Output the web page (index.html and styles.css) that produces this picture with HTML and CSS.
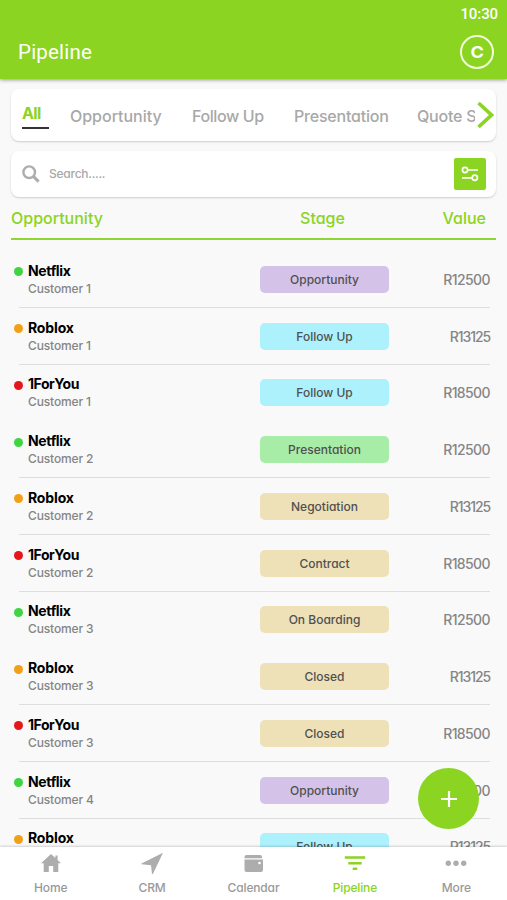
FILE: index.html
```html
<!DOCTYPE html>
<html lang="en">
<head>
<meta charset="utf-8">
<title>Pipeline</title>
<link rel="stylesheet" href="styles.css">
</head>
<body>
<div class="app">
  <header class="header">
    <div class="clock">10:30</div>
    <div class="bar"><h1 class="title">Pipeline</h1><div class="avatar"><span>C</span></div></div>
  </header>
  <main class="main">
    <nav class="tabs card">
      <div class="tab-strip">
        <span class="tab tab-active">All</span>
        <span class="tab t-opp">Opportunity</span>
        <span class="tab t-fol">Follow Up</span>
        <span class="tab t-pre">Presentation</span>
        <span class="tab t-quo">Quote Sent</span>
      </div>
      <svg class="chevron" width="17" height="28" viewBox="0 0 17 28"><path d="M1.500 2 14.500 14 1.500 26" fill="none" stroke="#8bd422" stroke-width="3.600"/></svg>
    </nav>
    <div class="search card">
      <svg width="18" height="18" viewBox="0 0 18 18" fill="none" stroke="#adadad"><circle cx="7.200" cy="7.200" r="5.800" stroke-width="2.400"/><path d="m11.600 11.600 5 5" stroke-width="3"/></svg>
      <span class="placeholder">Search.....</span>
      <div class="filter"><svg width="18" height="16" viewBox="0 0 18 16" fill="none" stroke="#fff" stroke-width="1.700"><circle cx="4" cy="4" r="2.600"/><path d="M6.600 4H17M1 11.800h10.200"/><circle cx="13.800" cy="11.800" r="2.600"/></svg></div>
    </div>
    <div class="table-head"><span class="h-opp">Opportunity</span><span class="h-stage">Stage</span><span class="h-value">Value</span></div>
    <div class="rows">
      <div class="row"><i class="dot green"></i><div class="who"><b class="netflix">Netflix</b><small>Customer 1</small></div><span class="badge purple">Opportunity</span><span class="value">R12500</span></div>
      <div class="row"><i class="dot orange"></i><div class="who"><b>Roblox</b><small>Customer 1</small></div><span class="badge cyan">Follow Up</span><span class="value narrow">R13125</span></div>
      <div class="row no-line"><i class="dot red"></i><div class="who"><b class="foryou">1ForYou</b><small>Customer 1</small></div><span class="badge cyan">Follow Up</span><span class="value">R18500</span></div>
      <div class="row"><i class="dot green"></i><div class="who"><b class="netflix">Netflix</b><small>Customer 2</small></div><span class="badge mint">Presentation</span><span class="value">R12500</span></div>
      <div class="row"><i class="dot orange"></i><div class="who"><b>Roblox</b><small>Customer 2</small></div><span class="badge sand">Negotiation</span><span class="value narrow">R13125</span></div>
      <div class="row"><i class="dot red"></i><div class="who"><b class="foryou">1ForYou</b><small>Customer 2</small></div><span class="badge sand">Contract</span><span class="value">R18500</span></div>
      <div class="row no-line"><i class="dot green"></i><div class="who"><b class="netflix">Netflix</b><small>Customer 3</small></div><span class="badge sand">On Boarding</span><span class="value">R12500</span></div>
      <div class="row"><i class="dot orange"></i><div class="who"><b>Roblox</b><small>Customer 3</small></div><span class="badge sand">Closed</span><span class="value narrow">R13125</span></div>
      <div class="row"><i class="dot red"></i><div class="who"><b class="foryou">1ForYou</b><small>Customer 3</small></div><span class="badge sand">Closed</span><span class="value">R18500</span></div>
      <div class="row"><i class="dot green"></i><div class="who"><b class="netflix">Netflix</b><small>Customer 4</small></div><span class="badge purple">Opportunity</span><span class="value">R12500</span></div>
      <div class="row"><i class="dot orange"></i><div class="who"><b>Roblox</b></div><span class="badge cyan">Follow Up</span><span class="value narrow">R13125</span></div>
    </div>
  </main>
  <div class="fab"><svg width="16" height="16" viewBox="0 0 16 16"><path d="M8 0v16M0 8h16" stroke="#fff" stroke-width="2.200"/></svg></div>
  <nav class="bottom">
    <div class="item"><svg width="22" height="22" viewBox="0 0 22 22"><path fill="#adadad" d="M11 2 1 11.200h2.700V20h5.100v-6h4.400v6h5.100v-8.800H21L17.600 8V3.600h-2.200v2.300z"/></svg><span>Home</span></div>
    <div class="item"><svg width="22" height="22" viewBox="0 0 22 22"><path fill="#adadad" d="M22 .8.5 11.500v.7l9.500 1.100L11 22h.9z"/></svg><span>CRM</span></div>
    <div class="item"><svg width="22" height="22" viewBox="0 0 22 22"><path fill="#adadad" d="M4.500 3H18a2 2 0 0 1 2 2v1.200H2.500V5a2 2 0 0 1 2-2zM2.500 7.400H21V18a2 2 0 0 1-2 2H4.500a2 2 0 0 1-2-2z"/><circle cx="17.500" cy="11" r="1.300" fill="#fff"/></svg><span>Calendar</span></div>
    <div class="item active"><svg width="22" height="22" viewBox="0 0 22 22"><path fill="none" stroke="#8bd422" stroke-width="2.400" d="M.8 5.500h20.400M4.300 11.200h13.400M8.700 16.700h4.600"/></svg><span>Pipeline</span></div>
    <div class="item"><svg width="22" height="22" viewBox="0 0 22 22" fill="#adadad"><circle cx="3.300" cy="11.200" r="2.700"/><circle cx="11" cy="11.200" r="2.700"/><circle cx="18.700" cy="11.200" r="2.700"/></svg><span>More</span></div>
  </nav>
</div>
</body>
</html>
```
FILE: styles.css
```css
* { box-sizing: border-box; }
body { margin: 0; background: #f9f9f9; font-family: Inter, "Liberation Sans", sans-serif; font-weight: 500; font-feature-settings: "cv11"; }
.app { width: 507px; height: 900px; display: flex; flex-direction: column; overflow: hidden; position: relative; }
.header { height: 79px; flex: none; background: #8bd422; color: #fff; box-shadow: 0 1px 4px rgba(0,0,0,.4); font-family: Roboto, sans-serif; }
.clock { height: 28px; padding-right: 9px; text-align: right; font-size: 15px; line-height: 29px; font-weight: 500; letter-spacing: -.1px; }
.bar { height: 47px; padding: 0 13px 0 18px; display: flex; align-items: center; justify-content: space-between; }
.title { margin: 0; font-size: 20.5px; font-weight: 400; letter-spacing: .2px; line-height: 24px; padding-top: 1px; }
.avatar { width: 34px; height: 34px; border: 2px solid #f1ffd8; border-radius: 50%; text-align: center; font: 700 16.5px/31px Inter, sans-serif; }
.avatar span { display: inline-block; transform: scaleX(1.1); }
.main { flex: 1; min-height: 0; overflow: hidden; padding: 10px 11px 0; display: flex; flex-direction: column; }
.card { flex: none; background: #fff; border-radius: 8px; box-shadow: 0 1px 2px rgba(0,0,0,.18); display: flex; align-items: center; }
.tabs { height: 52px; padding: 0 2px 0 11px; }
.tab-strip { width: 453px; flex: none; display: flex; align-items: center; overflow: hidden; white-space: nowrap; }
.tab { flex: none; color: #a8a8a8; font-size: 16px; line-height: 24px; padding-top: 2px; }
.tab-active { width: 27px; margin-right: 21px; padding: 0; height: 27px; line-height: 22px; color: #8bd422; font-weight: 700; letter-spacing: -.6px; border-bottom: 2px solid #333; }
.t-opp { width: 122px; letter-spacing: -.02px; }
.t-fol { width: 102px; letter-spacing: -.4px; }
.t-pre { width: 123px; letter-spacing: -.2px; }
.t-quo { letter-spacing: -.2px; }
.chevron { margin-left: 2px; }
.search { height: 46px; margin-top: 10px; padding: 0 10px 0 11px; }
.placeholder { flex: 1; margin-left: 9px; margin-top: -2px; font-size: 12px; letter-spacing: -.25px; color: #a8a8a8; }
.filter { width: 32px; height: 32px; border-radius: 2px; background: #8bd422; display: flex; align-items: center; justify-content: center; }
.table-head { flex: none; height: 43px; border-bottom: 2px solid #8fd633; display: grid; grid-template-columns: 235px 153px 1fr; padding-right: 10px; line-height: 42px; font-size: 16px; color: #8bd422; }
.h-stage { text-align: center; }
.h-value { text-align: right; }
.rows { padding: 11px 6px 0 3px; }
.row { height: 56.75px; display: grid; grid-template-columns: 14px 232px 129px 1fr; align-items: center; position: relative; }
.row:not(.no-line)::after { content: ""; position: absolute; left: 5px; right: 0; bottom: 0; height: 1px; background: #dedede; }
.dot { width: 9px; height: 9px; border-radius: 50%; margin-top: -15px; }
.green { background: #40d443; }
.orange { background: #f3a019; }
.red { background: #e4171b; }
.who { display: flex; flex-direction: column; height: 35px; }
.who b { font-size: 14px; line-height: 18px; letter-spacing: -.15px; color: #000; }
.who .netflix { letter-spacing: -.35px; }
.who .foryou { letter-spacing: -.45px; }
.who small { font-size: 12px; line-height: 17px; letter-spacing: -.13px; color: #858585; }
.badge { height: 27px; border-radius: 5px; text-align: center; line-height: 28px; font-size: 12px; color: #505050; }
.purple { background: #d4c2e8; }
.cyan { background: #acf1fc; }
.mint { background: #a8eda7; }
.sand { background: #eee1b8; }
.value { text-align: right; font-size: 14px; letter-spacing: -.6px; color: #858585; }
.narrow { letter-spacing: -1.1px; }
.fab { position: absolute; left: 418px; top: 768px; width: 61px; height: 61px; border-radius: 50%; background: #8bd422; display: flex; align-items: center; justify-content: center; }
.bottom { flex: none; height: 53px; background: #fff; box-shadow: 0 -1px 2px rgba(0,0,0,.16); display: grid; grid-template-columns: repeat(5, 1fr); position: relative; }
.item { display: flex; flex-direction: column; align-items: center; padding-top: 5px; font-size: 12px; line-height: 16px; letter-spacing: -.15px; color: #999; }
.item span { margin-top: 6px; }
.active { color: #8bd422; }
```
